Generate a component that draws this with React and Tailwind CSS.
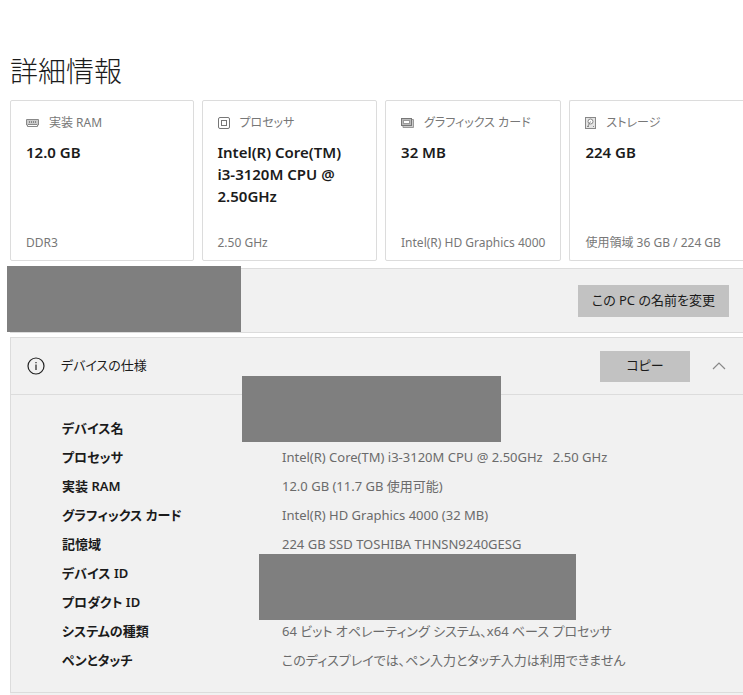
const RamIcon = () => (
    <svg width="13" height="8" viewBox="0 0 13 8" fill="none" stroke="#888" aria-hidden="true">
        <rect x="1" y="1" width="11" height="5" fill="#ccc" stroke="none" />
        <path d="M.5 .5h12v5.500h-1v1.500h-10v-1.500h-1z" />
        <path d="M3.500 2v2M5.500 2v2M7.500 2v2M9.500 2v2M2 5.500h9" />
    </svg>
);

const CpuIcon = () => (
    <svg width="12" height="12" viewBox="0 0 12 12" fill="none" stroke="#777" aria-hidden="true">
        <rect x=".5" y=".5" width="11" height="11" rx="1.500" />
        <rect x="3.500" y="3.500" width="5" height="5" />
    </svg>
);

const GpuIcon = () => (
    <svg width="13" height="10" viewBox="0 0 13 10" fill="none" stroke="#777" aria-hidden="true">
        <path d="M11 1.500h1.500v8H2V8" fill="#ccc" stroke="#999" />
        <rect x=".5" y=".5" width="10" height="7" fill="#bbb" />
        <rect x="2.500" y="2.500" width="6" height="3" fill="#fff" stroke="#999" />
    </svg>
);

const DiskIcon = () => (
    <svg width="11" height="12" viewBox="0 0 11 12" fill="none" stroke="#888" aria-hidden="true">
        <rect x=".5" y=".5" width="10" height="11" fill="#e4e4e4" />
        <circle cx="5.500" cy="4.500" r="2.500" fill="#fff" />
        <path d="M5.500 4.500L3 9M2 9.500h2M8 9.500h1" />
    </svg>
);

const cards = [
    { icon: <RamIcon />, title: '実装 RAM', value: '12.0 GB', note: 'DDR3' },
    { icon: <CpuIcon />, title: 'プロセッサ', value: 'Intel(R) Core(TM)\ni3-3120M CPU @\n2.50GHz', note: '2.50 GHz' },
    { icon: <GpuIcon />, title: 'グラフィックス カード', value: '32 MB', note: 'Intel(R) HD Graphics 4000' },
    { icon: <DiskIcon />, title: 'ストレージ', value: '224 GB', note: '使用領域 36 GB / 224 GB' },
];

const specs = [
    ['デバイス名', ''],
    ['プロセッサ', 'Intel(R) Core(TM) i3-3120M CPU @ 2.50GHz   2.50 GHz'],
    ['実装 RAM', '12.0 GB (11.7 GB 使用可能)'],
    ['グラフィックス カード', 'Intel(R) HD Graphics 4000 (32 MB)'],
    ['記憶域', '224 GB SSD TOSHIBA THNSN9240GESG'],
    ['デバイス ID', ''],
    ['プロダクト ID', ''],
    ['システムの種類', '64 ビット オペレーティング システム、x64 ベース プロセッサ'],
    ['ペンとタッチ', 'このディスプレイでは、ペン入力とタッチ入力は利用できません'],
];

const App = () => {
    return (
        <main
            lang="ja"
            className="overflow-hidden bg-white pt-[50px] pl-[10px] text-[13px] text-[#1b1b1b] font-['Noto_Sans','Noto_Sans_CJK_JP',sans-serif] [font-feature-settings:'palt']"
        >
            <h1 className="h-[50px] text-[28px] leading-10 font-light font-['Noto_Sans_CJK_JP',sans-serif]">詳細情報</h1>

            {/* Cards */}
            <div className="grid grid-cols-[184fr_176fr_176fr_174fr] gap-2">
                {cards.map((card) => (
                    <section
                        key={card.title}
                        className="flex min-h-[161px] flex-col rounded-xs border border-[#dcdcdc] px-[15px] pt-3 pb-[7px] last:rounded-r-none last:border-r-0"
                    >
                        <h2 className="flex h-5 items-center gap-[10px] text-xs whitespace-nowrap text-[#777]">
                            {card.icon}
                            {card.title}
                        </h2>
                        <p className="mt-2 text-[15px] leading-[22px] font-semibold whitespace-pre-line">{card.value}</p>
                        <p className="mt-auto text-xs leading-5 whitespace-nowrap text-[#777]">{card.note}</p>
                    </section>
                ))}
            </div>

            {/* PC name */}
            <section className="relative mt-[7px] flex h-[65px] items-center justify-end border-y border-l border-[#dcdcdc] bg-[#f1f1f1] pr-[14px]">
                <div className="absolute -top-[3px] -left-1 h-[66px] w-[234px] bg-[#7f7f7f]" />
                <button type="button" className="h-8 bg-[#c2c2c2] px-[14px] whitespace-nowrap">
                    この PC の名前を変更
                </button>
            </section>

            {/* Device specs */}
            <section className="relative mt-1 border-y border-l border-[#dcdcdc] bg-[#f1f1f1]">
                <header className="flex h-[57px] items-center border-b border-[#dcdcdc] pr-[17px] pl-4">
                    <svg width="18" height="18" viewBox="0 0 18 18" fill="none" stroke="#222" strokeWidth="1.2" aria-hidden="true">
                        <circle cx="9" cy="9" r="8" />
                        <path d="M9 7.500v5.500M9 5v1.300" />
                    </svg>
                    <h2 className="ml-4">デバイスの仕様</h2>
                    <button type="button" className="ml-auto h-[31px] w-[90px] bg-[#c2c2c2]">
                        コピー
                    </button>
                    <button type="button" aria-label="折りたたむ" className="ml-[22px]">
                        <svg width="14" height="8" viewBox="0 0 14 8" fill="none" stroke="#888" strokeWidth="1.2" aria-hidden="true">
                            <path d="M1 7l6-6 6 6" />
                        </svg>
                    </button>
                </header>
                <table className="mt-[19px] mb-[17px] ml-[51px]">
                    <tbody>
                        {specs.map(([name, value]) => (
                            <tr key={name} className="h-[29px]">
                                <th scope="row" className="w-[220px] text-left font-semibold whitespace-nowrap">
                                    {name}
                                </th>
                                <td className="whitespace-pre text-[#6b6b6b]">{value}</td>
                            </tr>
                        ))}
                    </tbody>
                </table>
                <div className="absolute top-[38px] left-[231px] h-[66px] w-[259px] bg-[#7f7f7f]" />
                <div className="absolute top-[216px] left-[248px] h-[66px] w-[317px] bg-[#7f7f7f]" />
            </section>
            <div className="h-0.5 bg-[#f1f1f1]" />
        </main>
    );
};

export default App;
